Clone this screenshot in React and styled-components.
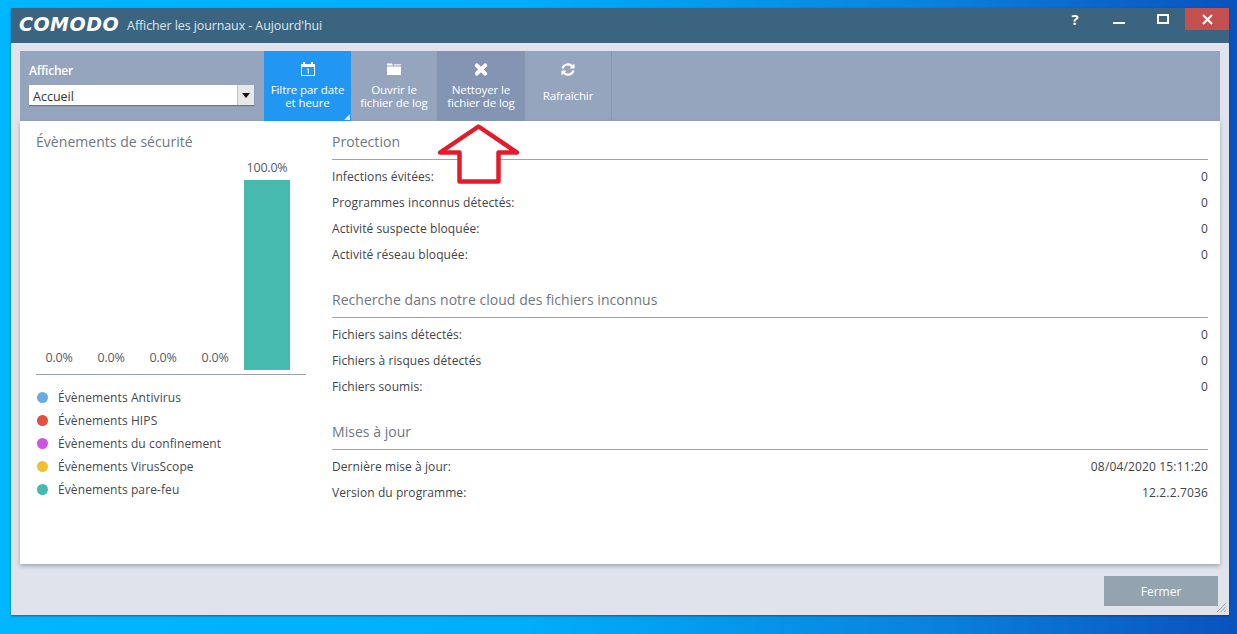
import React from "react";
import styled, { createGlobalStyle } from "styled-components";

const Global = createGlobalStyle`
  html, body {
    margin: 0;
    height: 100%;
    overflow: hidden;
  }
  body {
    font-family: "Open Sans", "Noto Sans", sans-serif;
    background: linear-gradient(90deg, #00b6ff 0%, #00aef9 42%, #0a82de 75%, #0a52be 100%);
  }
`;

const Desktop = styled.div`
  width: 1237px;
  height: 634px;
  padding: 8px 8px 0 11px;
  box-sizing: border-box;
`;

const Win = styled.div`
  position: relative;
  width: 1218px;
  height: 607px;
  display: flex;
  flex-direction: column;
  background: #e0e3ec;
  box-shadow: 0 1px 2px rgba(20, 50, 90, 0.6);
`;

const TitleBar = styled.div`
  height: 35px;
  flex: none;
  display: flex;
  align-items: flex-start;
  background: #3b6480;
  color: #fff;
`;

const Logo = styled.span`
  margin: 4px 0 0 8px;
  font-family: "DejaVu Sans", sans-serif;
  font-weight: 700;
  font-style: italic;
  font-size: 19px;
  line-height: 24px;
  letter-spacing: 0.5px;
`;

const Caption = styled.span`
  margin: 9px 0 0 8px;
  font-size: 12.5px;
  line-height: 18px;
  letter-spacing: -0.1px;
  color: #dfe7ee;
`;

const WinButtons = styled.div`
  margin-left: auto;
  display: flex;
  height: 22px;
`;

const WinButton = styled.div`
  width: ${(p) => p.$w || 44}px;
  height: 22px;
  display: flex;
  align-items: center;
  justify-content: center;
  background: ${(p) => (p.$close ? "#c44f4f" : "transparent")};
  color: #fff;
  font-weight: 700;
  font-size: 15px;
`;

const Body = styled.div`
  flex: 1;
  display: flex;
  flex-direction: column;
  padding: 8px 9px 0;
  min-height: 0;
`;

const Toolbar = styled.div`
  height: 70px;
  flex: none;
  display: flex;
  background: #96a5be;
  color: #fff;
`;

const SelectGroup = styled.div`
  width: 244px;
  flex: none;
  padding: 11px 10px 0 9px;
  box-sizing: border-box;
`;

const SelectLabel = styled.div`
  font-size: 12px;
  font-weight: 600;
  line-height: 17px;
  letter-spacing: -0.2px;
`;

const Select = styled.div`
  margin-top: 6px;
  height: 20px;
  display: flex;
  background: #fff;
  color: #333;
  font-size: 12.5px;
  line-height: 23px;
  padding-left: 4px;
  box-shadow: 0 1px 1px rgba(60, 70, 90, 0.5);
`;

const SelectArrow = styled.div`
  margin-left: auto;
  width: 16px;
  display: flex;
  align-items: center;
  justify-content: center;
  background: #e8e8e8;
  border-left: 1px solid #c4c4c4;
  &::before {
    content: "";
    border-left: 4px solid transparent;
    border-right: 4px solid transparent;
    border-top: 5px solid #111;
  }
`;

const ToolButton = styled.div`
  position: relative;
  width: ${(p) => p.$w}px;
  flex: none;
  box-sizing: border-box;
  display: flex;
  flex-direction: column;
  align-items: center;
  padding-top: 11px;
  background: ${(p) => (p.$active ? "#2196f3" : p.$hover ? "#8395b2" : "transparent")};
  border-right: ${(p) => (p.$sep ? "1px solid #8898b3" : "none")};
  color: #fff;
`;

const ToolIcon = styled.svg`
  width: 16px;
  height: 15px;
  flex: none;
`;

const ToolText = styled.div`
  margin-top: ${(p) => (p.$single ? 12 : 6)}px;
  font-size: 11.5px;
  line-height: 13px;
  text-align: center;
  letter-spacing: -0.1px;
  white-space: nowrap;
  color: #fff;
`;

const Corner = styled.div`
  position: absolute;
  right: 1px;
  bottom: 1px;
  width: 0;
  height: 0;
  border-left: 6px solid transparent;
  border-bottom: 6px solid #d8e8f8;
`;

const Panel = styled.div`
  height: 443px;
  flex: none;
  display: flex;
  background: #fff;
  box-shadow: 0 2px 4px rgba(60, 70, 90, 0.4);
  color: #3c4048;
`;

const LeftCol = styled.div`
  width: 270px;
  flex: none;
  margin-left: 16px;
`;

const RightCol = styled.div`
  flex: 1;
  margin: 0 12px 0 26px;
`;

const Heading = styled.div`
  font-size: 14px;
  line-height: 20px;
  letter-spacing: 0.04px;
  color: #6f7682;
`;

const LeftHeading = styled(Heading)`
  margin-top: 11px;
`;

const Chart = styled.div`
  height: 215px;
  margin-top: 7px;
  display: grid;
  grid-template-columns: repeat(5, 46px);
  column-gap: 6px;
  align-items: end;
`;

const BarCol = styled.div`
  display: flex;
  flex-direction: column;
  align-items: center;
  justify-content: flex-end;
  padding-bottom: 4px;
  box-sizing: border-box;
  height: 100%;
`;

const Pct = styled.div`
  font-size: 12.5px;
  line-height: 16px;
  letter-spacing: -0.2px;
  color: #555b66;
  padding-bottom: 4px;
`;

const Bar = styled.div`
  width: 46px;
  background: #46baad;
`;

const Axis = styled.div`
  border-top: 1px solid #9aa0ad;
`;

const Legend = styled.div`
  margin-top: 11px;
  display: flex;
  flex-direction: column;
`;

const LegendItem = styled.div`
  height: 23px;
  display: flex;
  align-items: center;
  font-size: 12px;
  letter-spacing: 0.1px;
  color: #44484f;
`;

const Dot = styled.span`
  width: 11px;
  height: 11px;
  border-radius: 50%;
  margin: 0 10px 0 1px;
  background: ${(p) => p.$c};
`;

const Section = styled.div`
  margin-top: ${(p) => p.$mt}px;
`;

const SectionHead = styled(Heading)`
  padding-bottom: 7px;
  border-bottom: 1px solid #9aa3ae;
  margin-bottom: 3px;
`;

const Row = styled.div`
  height: 26px;
  display: flex;
  justify-content: space-between;
  align-items: center;
  font-size: 12px;
  letter-spacing: 0.08px;
  color: #3f434a;
`;

const Value = styled.span`
  letter-spacing: 0.15px;
`;

const Footer = styled.div`
  flex: 1;
  display: flex;
  justify-content: flex-end;
  padding: 12px 2px 0 0;
`;

const CloseBtn = styled.div`
  width: 114px;
  height: 30px;
  background: #93a3af;
  color: #fff;
  font-size: 12px;
  line-height: 31px;
  text-align: center;
`;

const Grip = styled.svg`
  position: absolute;
  right: 3px;
  bottom: 3px;
  width: 9px;
  height: 9px;
`;

const Arrow = styled.svg`
  position: absolute;
  left: 426px;
  top: 115px;
  width: 84px;
  height: 64px;
`;

const bars = [
  { v: "0.0%", h: 0 },
  { v: "0.0%", h: 0 },
  { v: "0.0%", h: 0 },
  { v: "0.0%", h: 0 },
  { v: "100.0%", h: 190 },
];

const legend = [
  ["Évènements Antivirus", "#6aa9e4"],
  ["Évènements HIPS", "#e2503f"],
  ["Évènements du confinement", "#cb55e0"],
  ["Évènements VirusScope", "#efc034"],
  ["Évènements pare-feu", "#46baad"],
];

const sections = [
  {
    title: "Protection",
    mt: 11,
    rows: [
      ["Infections évitées:", "0"],
      ["Programmes inconnus détectés:", "0"],
      ["Activité suspecte bloquée:", "0"],
      ["Activité réseau bloquée:", "0"],
    ],
  },
  {
    title: "Recherche dans notre cloud des fichiers inconnus",
    mt: 23,
    rows: [
      ["Fichiers sains détectés:", "0"],
      ["Fichiers à risques détectés", "0"],
      ["Fichiers soumis:", "0"],
    ],
  },
  {
    title: "Mises à jour",
    mt: 23,
    rows: [
      ["Dernière mise à jour:", "08/04/2020 15:11:20"],
      ["Version du programme:", "12.2.2.7036"],
    ],
  },
];

export default function App() {
  return (
    <Desktop>
      <Global />
      <Win>
        <TitleBar>
          <Logo>COMODO</Logo>
          <Caption>Afficher les journaux - Aujourd'hui</Caption>
          <WinButtons>
            <WinButton $w={44}>?</WinButton>
            <WinButton $w={44}>
              <svg width="13" height="13" viewBox="0 0 13 13">
                <rect x="0" y="9" width="12" height="2" fill="#fff" />
              </svg>
            </WinButton>
            <WinButton $w={44}>
              <svg width="12" height="10" viewBox="0 0 12 10">
                <rect x="1" y="1" width="10" height="8" fill="none" stroke="#fff" strokeWidth="2" />
              </svg>
            </WinButton>
            <WinButton $w={44} $close>
              <svg width="11" height="11" viewBox="0 0 11 11">
                <path d="M1 1 L10 10 M10 1 L1 10" stroke="#fff" strokeWidth="2.2" />
              </svg>
            </WinButton>
          </WinButtons>
        </TitleBar>
        <Body>
          <Toolbar>
            <SelectGroup>
              <SelectLabel>Afficher</SelectLabel>
              <Select>
                Accueil
                <SelectArrow />
              </Select>
            </SelectGroup>
            <ToolButton $w={87} $active>
              <ToolIcon viewBox="0 0 16 15">
                <path d="M4 0v2M12 0v2" stroke="#fff" strokeWidth="2" />
                <path d="M1.5 2.5h13v11h-13z" fill="none" stroke="#fff" />
                <path d="M1 2h14v3H1z" fill="#fff" />
                <path d="M7 7.5l1.2-.8v5" fill="none" stroke="#fff" />
              </ToolIcon>
              <ToolText>
                Filtre par date
                <br />
                et heure
              </ToolText>
              <Corner />
            </ToolButton>
            <ToolButton $w={86}>
              <ToolIcon viewBox="0 0 16 15">
                <path d="M1 1.500h5l1 2h-6z" fill="#fff" />
                <path d="M1 4.500h14V13H1z" fill="#fff" />
                <path d="M7.500 2H15v1.500H8.300z" fill="#fff" opacity="0.7" />
              </ToolIcon>
              <ToolText>
                Ouvrir le
                <br />
                fichier de log
              </ToolText>
            </ToolButton>
            <ToolButton $w={88} $hover>
              <ToolIcon viewBox="0 0 16 15">
                <path d="M3.800 3.300L12.200 11.700M12.200 3.300L3.800 11.700" stroke="#fff" strokeWidth="4" strokeLinecap="round" />
              </ToolIcon>
              <ToolText>
                Nettoyer le
                <br />
                fichier de log
              </ToolText>
            </ToolButton>
            <ToolButton $w={87} $sep>
              <ToolIcon viewBox="0 0 16 15">
                <path d="M2.500 6.500A5.700 5.700 0 0 1 12.300 4.300" fill="none" stroke="#fff" strokeWidth="2.200" />
                <path d="M13.500 8.500A5.700 5.700 0 0 1 3.700 10.700" fill="none" stroke="#fff" strokeWidth="2.200" />
                <path d="M14.500 1.500v5h-5zM1.500 13.500v-5h5z" fill="#fff" />
              </ToolIcon>
              <ToolText $single>Rafraîchir</ToolText>
            </ToolButton>
          </Toolbar>
          <Panel>
            <LeftCol>
              <LeftHeading>Évènements de sécurité</LeftHeading>
              <Chart>
                {bars.map((b, i) => (
                  <BarCol key={i}>
                    <Pct>{b.v}</Pct>
                    {b.h > 0 && <Bar style={{ height: b.h }} />}
                  </BarCol>
                ))}
              </Chart>
              <Axis />
              <Legend>
                {legend.map(([label, c]) => (
                  <LegendItem key={label}>
                    <Dot $c={c} />
                    {label}
                  </LegendItem>
                ))}
              </Legend>
            </LeftCol>
            <RightCol>
              {sections.map((s) => (
                <Section key={s.title} $mt={s.mt}>
                  <SectionHead>{s.title}</SectionHead>
                  {s.rows.map(([k, v]) => (
                    <Row key={k}>
                      <span>{k}</span>
                      <Value>{v}</Value>
                    </Row>
                  ))}
                </Section>
              ))}
            </RightCol>
          </Panel>
          <Footer>
            <CloseBtn>Fermer</CloseBtn>
          </Footer>
        </Body>
        <Grip viewBox="0 0 9 9">
          <path d="M0 9L9 0M3.500 9L9 3.500M7 9L9 7" stroke="#8a94a8" strokeWidth="0.8" />
        </Grip>
        <Arrow viewBox="0 0 84 64">
          <path
            d="M41.500 3.500 L80 29.500 L61.500 29.500 L61.500 58.500 L22.500 58.500 L22.500 29.500 L3 29.500 Z"
            fill="#fff"
            stroke="#e21c2b"
            strokeWidth="4.500"
            strokeLinejoin="round"
          />
        </Arrow>
      </Win>
    </Desktop>
  );
}
